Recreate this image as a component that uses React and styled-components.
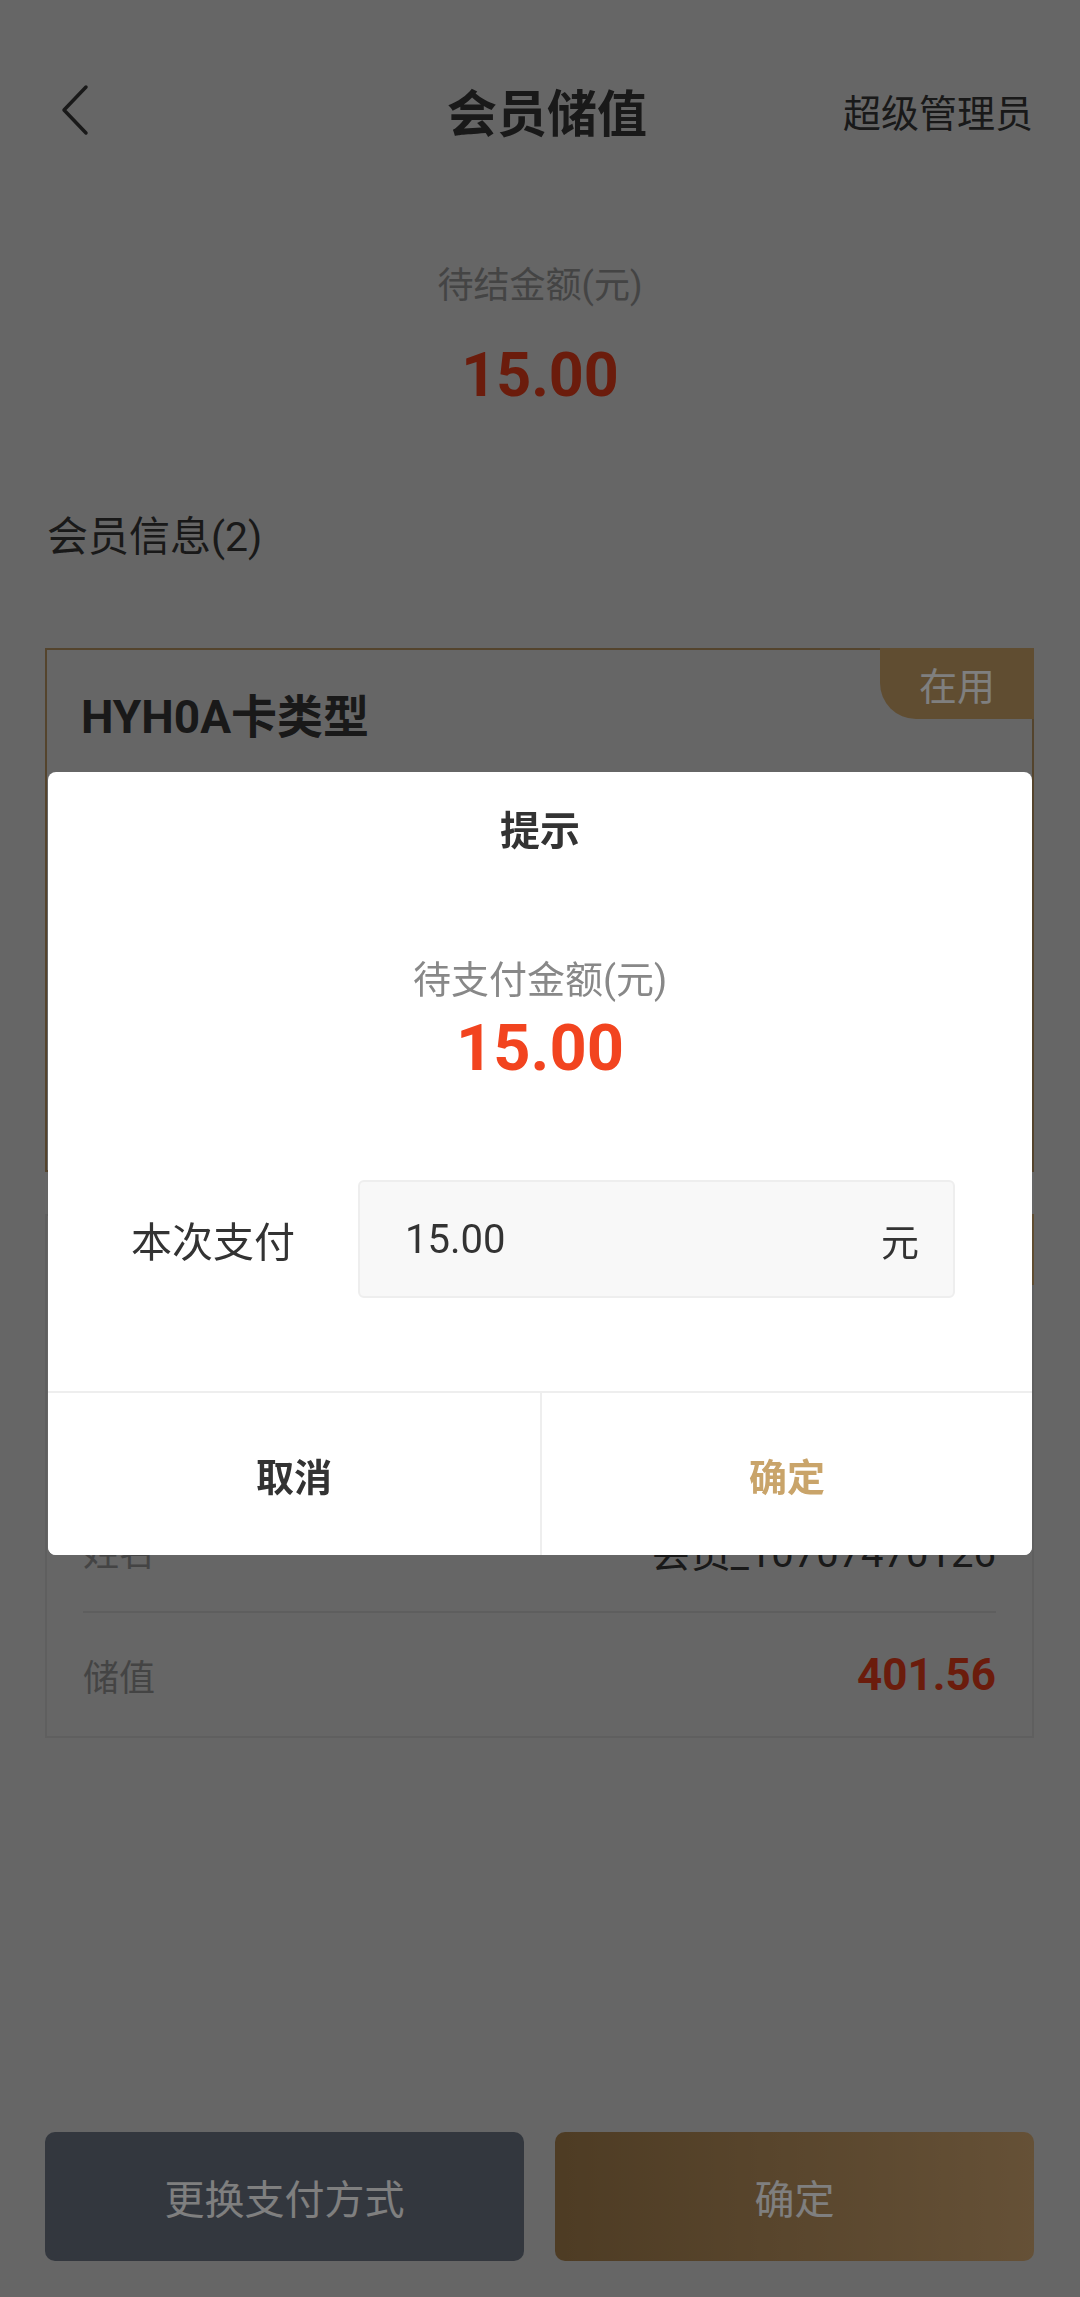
import React, { useState } from 'react';
import styled, { createGlobalStyle } from 'styled-components';

const GlobalStyle = createGlobalStyle`
  html, body {
    margin: 0;
    padding: 0;
  }
  body {
    background: #cccccc;
    font-family: Roboto, "Noto Sans CJK SC", sans-serif;
    color: #333;
  }
  * {
    box-sizing: border-box;
  }
`;

const RED = '#f2441f';
const PAGE_RED = '#d63818';
const GOLD = '#c9a46a';

const Page = styled.div`
  min-height: 100vh;
  display: flex;
  flex-direction: column;
`;

const Header = styled.header`
  height: 220px;
  display: grid;
  grid-template-columns: 1fr auto 1fr;
  align-items: center;
  padding: 0 47px 0 61px;
`;

const BackButton = styled.button`
  justify-self: start;
  display: flex;
  padding: 0;
  border: 0;
  background: none;
`;

const Title = styled.h1`
  margin: 0;
  font-size: 50px;
  font-weight: 700;
  color: #333;
`;

const Operator = styled.span`
  justify-self: end;
  font-size: 38px;
  color: #333;
`;

const Summary = styled.section`
  margin-top: 41px;
  text-align: center;
`;

const SummaryLabel = styled.div`
  font-size: 36px;
  line-height: 50px;
  color: #888;
`;

const SummaryAmount = styled.div`
  margin-top: 28px;
  font-size: 61px;
  line-height: 72px;
  font-weight: 700;
  color: ${PAGE_RED};
`;

const SectionTitle = styled.h2`
  margin: 98px 0 0 47px;
  font-size: 41px;
  line-height: 56px;
  font-weight: 400;
  color: #333;
`;

const CardList = styled.div`
  margin-top: 83px;
  padding: 0 46px 0 45px;
  display: flex;
  flex-direction: column;
  gap: 42px;
`;

const Card = styled.div`
  position: relative;
  border: 2px solid ${p => (p.$active ? '#a8885a' : '#bebebe')};
`;

const CardHeader = styled.div`
  padding: 39px 34px 50px;
  font-size: 46px;
  line-height: 56px;
  font-weight: 700;
  color: #333;
`;

const Badge = styled.span`
  position: absolute;
  top: -2px;
  right: -2px;
  width: 154px;
  height: 71px;
  display: flex;
  align-items: center;
  justify-content: center;
  background: #c09a62;
  color: #fff;
  font-size: 38px;
  border-bottom-left-radius: 36px;
`;

const Row = styled.div`
  height: 125px;
  margin: 0 36px;
  display: flex;
  align-items: center;
  justify-content: space-between;
  border-top: 2px solid #bcbcbc;
`;

const RowLabel = styled.span`
  font-size: 36px;
  color: #888;
`;

const RowValue = styled.span`
  font-size: ${p => (p.$money ? '44px' : '40px')};
  font-weight: ${p => (p.$money ? 700 : 400)};
  color: ${p => (p.$money ? PAGE_RED : '#333')};
`;

const Footer = styled.footer`
  margin-top: auto;
  padding: 0 46px 36px 45px;
  display: grid;
  grid-template-columns: 1fr 1fr;
  gap: 31px;
`;

const FooterButton = styled.button`
  height: 129px;
  border: 0;
  border-radius: 10px;
  font-family: inherit;
  font-size: 40px;
  color: #fff;
  background: ${p => (p.$primary ? 'linear-gradient(90deg, #9c7848, #cba26e)' : '#666e7c')};
`;

const Mask = styled.div`
  position: fixed;
  inset: 0;
  padding-top: 30px;
  display: flex;
  align-items: center;
  justify-content: center;
  background: rgba(0, 0, 0, 0.5);
`;

const Dialog = styled.div`
  width: 984px;
  background: #fff;
  border-radius: 8px;
  overflow: hidden;
`;

const DialogTitle = styled.div`
  padding-top: 32px;
  font-size: 40px;
  line-height: 56px;
  font-weight: 700;
  text-align: center;
  color: #333;
`;

const DueLabel = styled.div`
  margin-top: 95px;
  font-size: 38px;
  line-height: 50px;
  text-align: center;
  color: #888;
`;

const DueAmount = styled.div`
  margin-top: 5px;
  font-size: 65px;
  line-height: 77px;
  font-weight: 700;
  text-align: center;
  color: ${RED};
`;

const PayRow = styled.div`
  margin-top: 93px;
  padding: 0 77px 0 83px;
  display: flex;
  align-items: center;
`;

const PayLabel = styled.span`
  flex: 0 0 227px;
  font-size: 41px;
  color: #333;
`;

const InputBox = styled.label`
  flex: 1;
  min-width: 0;
  height: 118px;
  padding: 0 34px 0 45px;
  display: flex;
  align-items: center;
  background: #f8f8f8;
  border: 2px solid #eee;
  border-radius: 6px;
`;

const Input = styled.input`
  flex: 1;
  width: 0;
  min-width: 0;
  border: 0;
  outline: none;
  background: transparent;
  font-family: inherit;
  font-size: 40px;
  color: #333;
  padding: 0;
`;

const Unit = styled.span`
  font-size: 38px;
  color: #333;
`;

const Actions = styled.div`
  margin-top: 93px;
  height: 164px;
  display: grid;
  grid-template-columns: 1fr 1fr;
  border-top: 2px solid #eee;
`;

const ActionButton = styled.button`
  border: 0;
  background: #fff;
  font-family: inherit;
  font-size: 38px;
  font-weight: 700;
  color: ${p => p.$color};
  & + & {
    border-left: 2px solid #eee;
  }
`;

const cards = [
  { name: 'HYH0A卡类型', badge: '在用', active: true, phone: '157****0123', member: '会员_15707470123', balance: '120.00' },
  { name: 'HYH0B卡类型', badge: '切换', active: false, phone: '107****0126', member: '会员_10707470126', balance: '401.56' },
];

export default function App() {
  const [pay, setPay] = useState('15.00');

  return (
    <Page>
      <GlobalStyle />
      <Header>
        <BackButton aria-label="返回">
          <svg width="28" height="52" viewBox="0 0 28 52">
            <path d="M25 3 L3 26 L25 49" fill="none" stroke="#333" strokeWidth="3.5" strokeLinecap="round" strokeLinejoin="round" />
          </svg>
        </BackButton>
        <Title>会员储值</Title>
        <Operator>超级管理员</Operator>
      </Header>

      <Summary>
        <SummaryLabel>待结金额(元)</SummaryLabel>
        <SummaryAmount>15.00</SummaryAmount>
      </Summary>

      <SectionTitle>会员信息(2)</SectionTitle>
      <CardList>
        {cards.map(c => (
          <Card key={c.name} $active={c.active}>
            <CardHeader>{c.name}</CardHeader>
            <Badge>{c.badge}</Badge>
            <Row>
              <RowLabel>手机号</RowLabel>
              <RowValue>{c.phone}</RowValue>
            </Row>
            <Row>
              <RowLabel>姓名</RowLabel>
              <RowValue>{c.member}</RowValue>
            </Row>
            <Row>
              <RowLabel>储值</RowLabel>
              <RowValue $money>{c.balance}</RowValue>
            </Row>
          </Card>
        ))}
      </CardList>

      <Footer>
        <FooterButton>更换支付方式</FooterButton>
        <FooterButton $primary>确定</FooterButton>
      </Footer>

      <Mask>
        <Dialog>
          <DialogTitle>提示</DialogTitle>
          <DueLabel>待支付金额(元)</DueLabel>
          <DueAmount>15.00</DueAmount>
          <PayRow>
            <PayLabel>本次支付</PayLabel>
            <InputBox>
              <Input value={pay} onChange={e => setPay(e.target.value)} />
              <Unit>元</Unit>
            </InputBox>
          </PayRow>
          <Actions>
            <ActionButton $color="#333">取消</ActionButton>
            <ActionButton $color={GOLD}>确定</ActionButton>
          </Actions>
        </Dialog>
      </Mask>
    </Page>
  );
}
